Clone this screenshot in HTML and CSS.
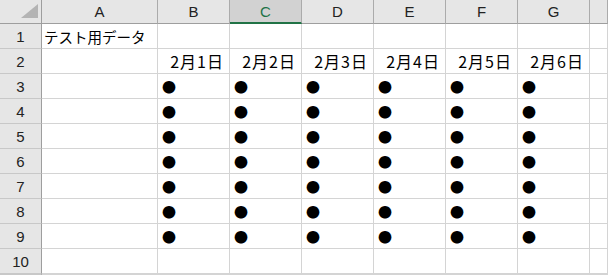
FILE: index.html
```html
<!DOCTYPE html>
<html lang="ja">
<head>
    <meta charset="UTF-8">
    <title>テスト用データ</title>
    <link rel="stylesheet" href="styles.css">
</head>
<body>
    <div class="sheet">
        <!-- Column headers -->
        <div class="corner"><span class="tri"></span></div>
        <div class="col-head">A</div>
        <div class="col-head">B</div>
        <div class="col-head active">C</div>
        <div class="col-head">D</div>
        <div class="col-head">E</div>
        <div class="col-head">F</div>
        <div class="col-head">G</div>
        <div class="col-head"></div>

        <!-- Row 1 -->
        <div class="row-head">1</div>
        <div class="cell">テスト用データ</div>
        <div class="cell"></div><div class="cell"></div><div class="cell"></div>
        <div class="cell"></div><div class="cell"></div><div class="cell"></div><div class="cell"></div>

        <!-- Row 2: dates -->
        <div class="row-head">2</div>
        <div class="cell"></div>
        <div class="cell date">2月1日</div>
        <div class="cell date">2月2日</div>
        <div class="cell date">2月3日</div>
        <div class="cell date">2月4日</div>
        <div class="cell date">2月5日</div>
        <div class="cell date">2月6日</div>
        <div class="cell"></div>

        <!-- Rows 3-9: marks -->
        <div class="row-head">3</div>
        <div class="cell"></div>
        <div class="cell mark">●</div><div class="cell mark">●</div><div class="cell mark">●</div>
        <div class="cell mark">●</div><div class="cell mark">●</div><div class="cell mark">●</div>
        <div class="cell"></div>

        <div class="row-head">4</div>
        <div class="cell"></div>
        <div class="cell mark">●</div><div class="cell mark">●</div><div class="cell mark">●</div>
        <div class="cell mark">●</div><div class="cell mark">●</div><div class="cell mark">●</div>
        <div class="cell"></div>

        <div class="row-head">5</div>
        <div class="cell"></div>
        <div class="cell mark">●</div><div class="cell mark">●</div><div class="cell mark">●</div>
        <div class="cell mark">●</div><div class="cell mark">●</div><div class="cell mark">●</div>
        <div class="cell"></div>

        <div class="row-head">6</div>
        <div class="cell"></div>
        <div class="cell mark">●</div><div class="cell mark">●</div><div class="cell mark">●</div>
        <div class="cell mark">●</div><div class="cell mark">●</div><div class="cell mark">●</div>
        <div class="cell"></div>

        <div class="row-head">7</div>
        <div class="cell"></div>
        <div class="cell mark">●</div><div class="cell mark">●</div><div class="cell mark">●</div>
        <div class="cell mark">●</div><div class="cell mark">●</div><div class="cell mark">●</div>
        <div class="cell"></div>

        <div class="row-head">8</div>
        <div class="cell"></div>
        <div class="cell mark">●</div><div class="cell mark">●</div><div class="cell mark">●</div>
        <div class="cell mark">●</div><div class="cell mark">●</div><div class="cell mark">●</div>
        <div class="cell"></div>

        <div class="row-head">9</div>
        <div class="cell"></div>
        <div class="cell mark">●</div><div class="cell mark">●</div><div class="cell mark">●</div>
        <div class="cell mark">●</div><div class="cell mark">●</div><div class="cell mark">●</div>
        <div class="cell"></div>

        <!-- Row 10 -->
        <div class="row-head">10</div>
        <div class="cell"></div><div class="cell"></div><div class="cell"></div><div class="cell"></div>
        <div class="cell"></div><div class="cell"></div><div class="cell"></div><div class="cell"></div>

        <!-- Row 11 (cut off) -->
        <div class="row-head"></div>
        <div class="cell"></div><div class="cell"></div><div class="cell"></div><div class="cell"></div>
        <div class="cell"></div><div class="cell"></div><div class="cell"></div><div class="cell"></div>
    </div>
</body>
</html>
```

FILE: styles.css
```css
/* Basic setup */
* {
    margin: 0;
    padding: 0;
    box-sizing: border-box;
}

html, body {
    width: 100%;
    height: 100%;
    overflow: hidden;
}

body {
    background-color: #fff;
    color: #000;
    font-family: "Noto Sans CJK JP", "Liberation Sans", sans-serif;
}

/* Spreadsheet grid */
.sheet {
    display: grid;
    grid-template-columns: 42px 116px repeat(6, 72px) 18px;
    grid-template-rows: 24px repeat(10, 25px) 1px;
    width: 608px;
    height: 275px;
    overflow: hidden;
}

.corner,
.col-head,
.row-head {
    background-color: #e6e6e6;
    color: #222;
    font-family: "Liberation Sans", sans-serif;
    font-size: 15px;
    overflow: hidden;
}

.corner {
    display: flex;
    justify-content: flex-end;
    align-items: flex-end;
    padding: 0 3px 5px 0;
    border-right: 1px solid #9e9e9e;
    border-bottom: 1px solid #9e9e9e;
}

.corner .tri {
    width: 17px;
    height: 14px;
    background-color: #b4b4b4;
    clip-path: polygon(100% 0, 100% 100%, 0 100%);
}

.col-head {
    display: flex;
    align-items: center;
    justify-content: center;
    border-right: 1px solid #ababab;
    border-bottom: 1px solid #9e9e9e;
}

.col-head.active {
    background-color: #d2d2d2;
    color: #217346;
    border-bottom: 2px solid #217346;
}

.row-head {
    display: flex;
    align-items: center;
    justify-content: center;
    border-right: 1px solid #9e9e9e;
    border-bottom: 1px solid #c8c8c8;
}

.cell {
    display: flex;
    align-items: center;
    padding: 0 2px;
    font-size: 14.5px;
    white-space: nowrap;
    overflow: hidden;
    border-right: 1px solid #d4d4d4;
    border-bottom: 1px solid #d4d4d4;
}

.cell.date {
    justify-content: flex-end;
    padding-right: 5px;
    font-size: 16px;
    letter-spacing: 1px;
}

.cell.mark {
    padding-left: 4px;
    font-size: 14px;
}
```
